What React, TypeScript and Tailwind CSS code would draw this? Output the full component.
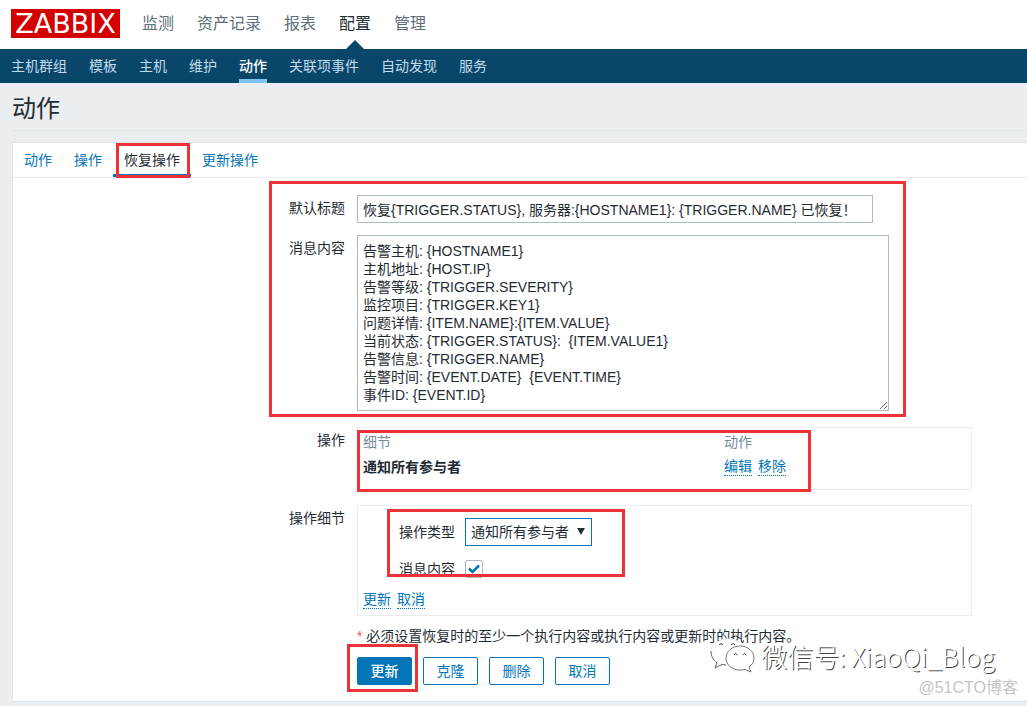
import type { ReactNode } from "react";

const mainMenu = ["监测", "资产记录", "报表", "配置", "管理"];
const subMenu = ["主机群组", "模板", "主机", "维护", "动作", "关联项事件", "自动发现", "服务"];
const tabs = ["动作", "操作", "恢复操作", "更新操作"];

const message = `告警主机: {HOSTNAME1}
主机地址: {HOST.IP}
告警等级: {TRIGGER.SEVERITY}
监控项目: {TRIGGER.KEY1}
问题详情: {ITEM.NAME}:{ITEM.VALUE}
当前状态: {TRIGGER.STATUS}:  {ITEM.VALUE1}
告警信息: {TRIGGER.NAME}
告警时间: {EVENT.DATE}  {EVENT.TIME}
事件ID: {EVENT.ID}`;

function Highlight({ className }: { className: string }) {
  return (
    <span
      aria-hidden="true"
      className={`pointer-events-none absolute border-[3px] border-[#ee3338] ${className}`}
    />
  );
}

function Row({ label, htmlFor, children }: { label?: string; htmlFor?: string; children: ReactNode }) {
  return (
    <div className="grid grid-cols-[332px_minmax(0,1fr)] gap-3">
      <div className="pt-1 text-right leading-[18px]">
        {label && (htmlFor ? <label htmlFor={htmlFor}>{label}</label> : label)}
      </div>
      <div>{children}</div>
    </div>
  );
}

function DottedLink({ children }: { children: ReactNode }) {
  return (
    <a href="#" className="border-b border-dotted border-[#0275b8] leading-[17px] text-[#0275b8]">
      {children}
    </a>
  );
}

function FormButton({ children }: { children: ReactNode }) {
  return (
    <button type="button" className="h-7 w-[55px] rounded-xs border border-[#0275b8] bg-white text-[#0275b8]">
      {children}
    </button>
  );
}

function Header() {
  return (
    <header>
      <div className="flex h-[49px] items-stretch gap-[22px] bg-white pl-[11px]">
        <a
          href="#"
          className="mt-[9px] flex h-[29px] w-[109px] items-center justify-center bg-[#d40000] font-['DejaVu_Sans',sans-serif] text-[27px] leading-none text-white"
        >
          ZABBIX
        </a>
        <nav className="flex gap-[23px] text-base">
          {mainMenu.map((item) => (
            <a
              key={item}
              href="#"
              className={`relative pt-3 leading-6 ${item === "配置" ? "text-[#1f2c33]" : "text-[#5d6f7a]"}`}
            >
              {item}
              {item === "配置" && (
                <svg
                  className="absolute bottom-0 left-1/2 -translate-x-1/2"
                  width="18"
                  height="9"
                  viewBox="0 0 18 9"
                  aria-hidden="true"
                >
                  <path d="M0 9 L9 0 L18 9Z" fill="#0a466a" />
                </svg>
              )}
            </a>
          ))}
        </nav>
      </div>
      <nav className="flex h-[34px] gap-[22px] bg-[#0a466a] pl-[11px]">
        {subMenu.map((item) => (
          <a
            key={item}
            href="#"
            className={`border-b-4 pt-[7px] leading-5 ${
              item === "动作" ? "border-[#7fc4f0] font-medium text-white" : "border-transparent text-[#c3dcec]"
            }`}
          >
            {item}
          </a>
        ))}
      </nav>
    </header>
  );
}

function Watermark() {
  return (
    <div className="pointer-events-none absolute right-8 bottom-8 flex items-center gap-[6px]">
      <svg width="45" height="37" viewBox="0 0 45 37" fill="none" aria-hidden="true">
        <path
          d="M18 2C8 2 1 7.500 1 15c0 4.500 2.300 8 6 10.500L5 31l7-3.500c2 .7 4 .8 6 .8C28 28 35 22 35 15S28 2 18 2Z"
          fill="#fff"
          stroke="#eee"
        />
        <path d="M1 14c0 5 2 9 6 11.500L5 31l7-3.500 4 .5" stroke="#666" />
        <path
          d="M30 9c8 0 14 5.500 14 12 0 4-2 7-5 9l2 5-6-2.500c-2 .5-3 .6-5 .6-8 0-14-5.500-14-12S22 9 30 9Z"
          fill="#fff"
          stroke="#777"
        />
        <path d="M9 8q2-3 4 0M21 8q2-3 4 0M24 18q1.500-3 3.500 0M33 18q1.500-3 3.500 0" stroke="#444" />
      </svg>
      <span className="text-[26px] leading-8 font-light whitespace-nowrap text-white font-['Noto_Sans_CJK_SC',sans-serif] [text-shadow:1px_1px_0_#444]">
        微信号: XiaoQi_Blog
      </span>
    </div>
  );
}

export default function App() {
  return (
    <div className="min-h-screen bg-[#ebeef0] font-['Liberation_Sans','Noto_Sans_CJK_SC',sans-serif] text-sm text-[#1f2c33]">
      <Header />
      <main className="relative pb-1 pl-3">
        <h1 className="flex h-12 items-center border-b border-[#dfe4e7] text-2xl text-[#1f2c33]">
          <span className="pt-1">动作</span>
        </h1>

        <form
          className="relative mt-[11px] border border-r-0 border-[#dfe4e7] bg-white pb-4"
          onSubmit={(e) => e.preventDefault()}
        >
          <div className="flex h-[35px] border-b border-[#ebeef0]">
            {tabs.map((tab) => (
              <button
                key={tab}
                type="button"
                className={`relative border-b-3 px-[11px] pt-[2px] leading-5 ${
                  tab === "恢复操作" ? "border-[#0275b8]" : "border-transparent text-[#0275b8]"
                }`}
              >
                {tab}
                {tab === "恢复操作" && <Highlight className="top-0 right-px -bottom-1 left-[3px]" />}
              </button>
            ))}
          </div>

          <div className="relative mt-[17px] flex flex-col gap-3">
            <Row label="默认标题" htmlFor="subject">
              <input
                id="subject"
                type="text"
                defaultValue="恢复{TRIGGER.STATUS}, 服务器:{HOSTNAME1}: {TRIGGER.NAME} 已恢复！"
                className="block h-7 w-full max-w-[516px] border border-[#acbbc2] px-[5px]"
              />
            </Row>
            <Row label="消息内容" htmlFor="message">
              <textarea
                id="message"
                defaultValue={message}
                className="block h-44 w-full max-w-[532px] border border-[#acbbc2] px-[5px] pt-[6px] leading-[18px]"
              />
            </Row>
            <Highlight className="-top-[14px] -bottom-[6px] left-64 w-[637px]" />
          </div>

          <div className="mt-4 flex flex-col gap-[15px]">
            <Row label="操作">
              <div className="relative h-[63px] max-w-[615px] border border-[#ebeef0] px-[5px] pt-1">
                <table className="w-full text-left leading-5">
                  <thead>
                    <tr className="text-[#768d99]">
                      <th className="w-[361px] p-0 font-normal">细节</th>
                      <th className="p-0 font-normal">动作</th>
                    </tr>
                  </thead>
                  <tbody>
                    <tr>
                      <td className="p-0 pt-[5px] font-bold">通知所有参与者</td>
                      <td className="p-0 pt-[5px]">
                        <span className="flex gap-[6px]">
                          <DottedLink>编辑</DottedLink>
                          <DottedLink>移除</DottedLink>
                        </span>
                      </td>
                    </tr>
                  </tbody>
                </table>
                <Highlight className="top-[2px] -left-px h-[62px] w-[454px]" />
              </div>
            </Row>
            <Row label="操作细节">
              <div className="relative h-[111px] max-w-[615px] border border-[#ebeef0] px-[5px] pt-3">
                <div className="flex items-center gap-[10px] pl-9">
                  <label htmlFor="optype">操作类型</label>
                  <span className="relative">
                    <select
                      id="optype"
                      className="block h-7 w-[127px] appearance-none border border-[#0275b8] bg-white pl-[5px]"
                    >
                      <option>通知所有参与者</option>
                    </select>
                    <svg
                      className="pointer-events-none absolute top-[10px] right-[7px]"
                      width="8"
                      height="7"
                      viewBox="0 0 9 8"
                      aria-hidden="true"
                    >
                      <path d="M0 0H9L4.500 8Z" fill="#1f2c33" />
                    </svg>
                  </span>
                </div>
                <div className="mt-[13px] flex items-center gap-[10px] pl-9 leading-5">
                  <label htmlFor="opmessage">消息内容</label>
                  <span className="relative">
                    <input
                      id="opmessage"
                      type="checkbox"
                      defaultChecked
                      className="block size-[18px] appearance-none rounded-xs border border-[#acbbc2] bg-white"
                    />
                    <svg
                      className="pointer-events-none absolute top-[3px] left-[3px]"
                      width="12"
                      height="12"
                      viewBox="0 0 12 12"
                      fill="none"
                      aria-hidden="true"
                    >
                      <path d="M1 5.500L4.500 9L11 2.500" stroke="#0275b8" strokeWidth="2.500" />
                    </svg>
                  </span>
                </div>
                <div className="mt-3 flex gap-[6px]">
                  <DottedLink>更新</DottedLink>
                  <DottedLink>取消</DottedLink>
                </div>
                <Highlight className="top-[3px] left-[29px] h-[68px] w-[238px]" />
              </div>
            </Row>
          </div>

          <div className="mt-[10px]">
            <Row>
              <p className="leading-5">
                <span className="text-[#e45959]">*</span> 必须设置恢复时的至少一个执行内容或执行内容或更新时的执行内容。
              </p>
              <div className="relative mt-[11px] flex gap-[11px]">
                <button
                  type="submit"
                  className="h-7 w-[55px] rounded-xs border border-[#0275b8] bg-[#0275b8] font-medium text-white"
                >
                  更新
                </button>
                <FormButton>克隆</FormButton>
                <FormButton>删除</FormButton>
                <FormButton>取消</FormButton>
                <Highlight className="-top-[13px] -left-[10px] h-12 w-[71px]" />
              </div>
            </Row>
          </div>
        </form>
        <Watermark />
        <span className="pointer-events-none absolute right-[9px] bottom-2 text-base leading-5 text-[#c4c4c4]">
          @51CTO博客
        </span>
      </main>
    </div>
  );
}
